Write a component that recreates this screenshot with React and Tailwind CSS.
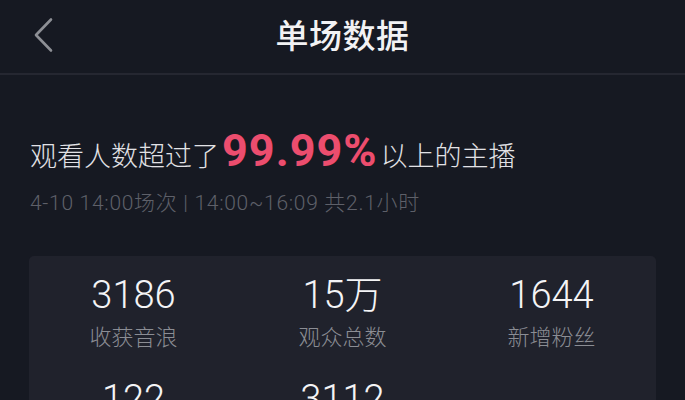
import React from "react";

const stats = [
  { value: "3186", label: "收获音浪" },
  { value: "15万", label: "观众总数" },
  { value: "1644", label: "新增粉丝" },
  { value: "122", label: "评论人数" },
  { value: "3112", label: "送礼人数" },
];

const cjk = { fontFamily: "'Noto Sans CJK SC', 'Noto Sans', sans-serif" };
const num = { fontFamily: "Roboto, 'Noto Sans CJK SC', sans-serif" };

export default function App() {
  return (
    <div className="w-[685px] h-[400px] overflow-hidden bg-[#161922]" style={cjk}>
      {/* header */}
      <div className="relative h-[75px] flex items-center justify-center border-b-2 border-[#252731]">
        <button className="absolute left-[30px] top-[16px] w-[26px] h-[38px] flex items-center justify-center">
          <svg width="22" height="36" viewBox="0 0 22 36" fill="none">
            <path d="M19 2.5 L4 18 L19 33.5" stroke="#8d8f95" strokeWidth="2.6" strokeLinecap="round" strokeLinejoin="round" />
          </svg>
        </button>
        <h1 className="text-[33px] font-medium text-[#f2f2f4] leading-none -mt-[4px] tracking-[0.5px]">单场数据</h1>
      </div>

      {/* summary */}
      <div className="px-[30px] pt-[53px]">
        <div className="flex items-baseline text-[27px] text-[#e2e2e6] leading-none font-light">
          <span>观看人数超过了</span>
          <span
            className="text-[45px] font-bold text-[#ec4d6e] tracking-[1px] mx-[3px]"
            style={{ fontFamily: "Roboto, 'Liberation Sans', sans-serif" }}
          >
            99.99%
          </span>
          <span>以上的主播</span>
        </div>
        <p className="mt-[20px] text-[21px] text-[#5e6069] leading-none font-light tracking-[0.7px]" style={num}>
          4-10 14:00场次 | 14:00~16:09 共2.1小时
        </p>
      </div>

      {/* stats card */}
      <div className="mx-[29px] mt-[42px] bg-[#20222c] rounded-[5px] grid grid-cols-3 gap-y-[34px] pt-[20px] pb-6">
        {stats.map((s) => (
          <div key={s.label} className="flex flex-col items-center">
            <span className="text-[38px] text-[#f4f4f6] leading-none font-light" style={num}>
              {s.value}
            </span>
            <span className="mt-[10px] text-[22px] text-[#8b8d94] leading-none font-light">{s.label}</span>
          </div>
        ))}
      </div>
    </div>
  );
}
